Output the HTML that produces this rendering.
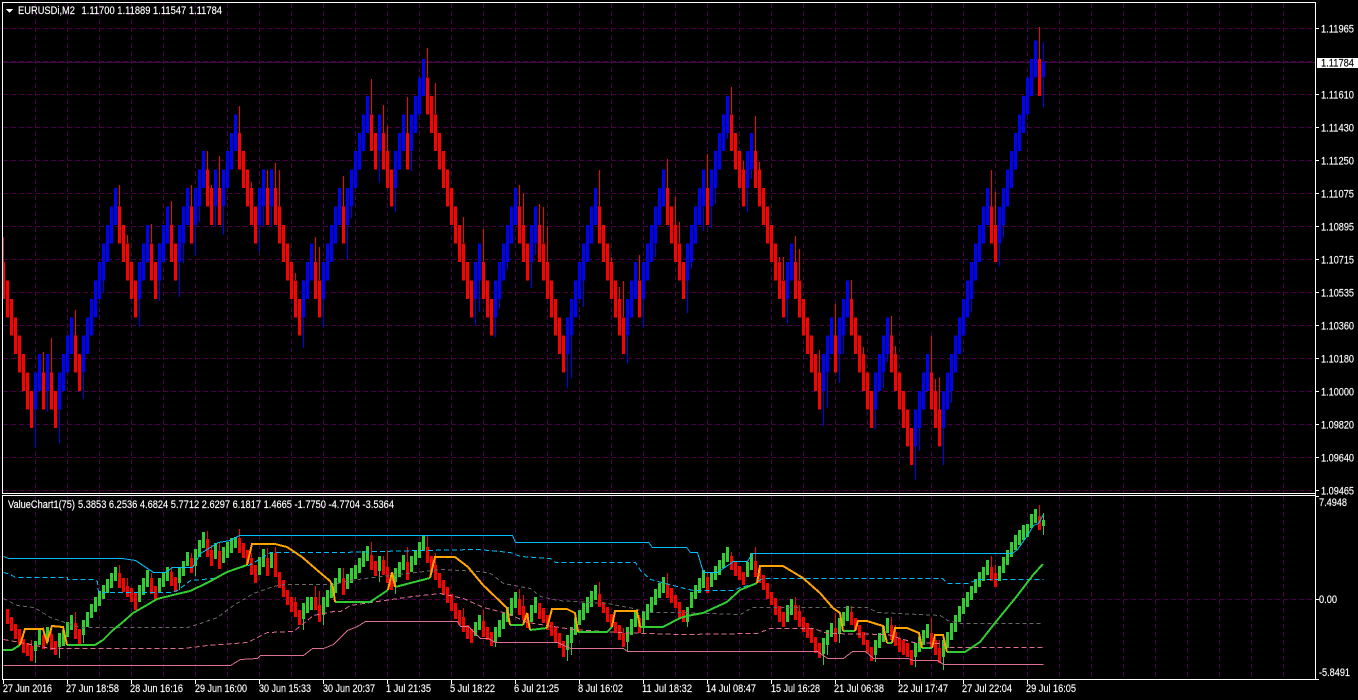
<!DOCTYPE html>
<html>
<head>
<meta charset="utf-8">
<title>EURUSDi,M2</title>
<style>
html,body{margin:0;padding:0;background:#000;width:1358px;height:700px;overflow:hidden}
svg{display:block}
text{font-family:"Liberation Sans",sans-serif;font-size:11px;fill:#fff;stroke:#fff;stroke-width:.15px}
.c{shape-rendering:crispEdges;fill:none}
</style>
</head>
<body>
<svg width="1358" height="700" viewBox="0 0 1358 700" xmlns="http://www.w3.org/2000/svg">
<rect width="1358" height="700" fill="#000"/>

<!-- grid -->
<g class="c" stroke="#480048" stroke-width="1" stroke-dasharray="5 3">
<path d="M3 28.5H1315M3 94.5H1315M3 127.5H1315M3 160.5H1315M3 193.5H1315M3 226.5H1315M3 259.5H1315M3 292.5H1315M3 325.5H1315M3 358.5H1315M3 391.5H1315M3 424.5H1315M3 457.5H1315M3 490.5H1315M3 61.5H1315"/>
<path d="M35.5 3V493M67.5 3V493M99.5 3V493M131.5 3V493M163.5 3V493M195.5 3V493M227.5 3V493M259.5 3V493M291.5 3V493M323.5 3V493M355.5 3V493M387.5 3V493M419.5 3V493M451.5 3V493M483.5 3V493M515.5 3V493M547.5 3V493M579.5 3V493M611.5 3V493M643.5 3V493M675.5 3V493M707.5 3V493M739.5 3V493M771.5 3V493M803.5 3V493M835.5 3V493M867.5 3V493M899.5 3V493M931.5 3V493M963.5 3V493M995.5 3V493M1027.5 3V493M1059.5 3V493M1091.5 3V493M1123.5 3V493M1155.5 3V493M1187.5 3V493M1219.5 3V493M1251.5 3V493M1283.5 3V493"/>
<path d="M35.5 496V679M67.5 496V679M99.5 496V679M131.5 496V679M163.5 496V679M195.5 496V679M227.5 496V679M259.5 496V679M291.5 496V679M323.5 496V679M355.5 496V679M387.5 496V679M419.5 496V679M451.5 496V679M483.5 496V679M515.5 496V679M547.5 496V679M579.5 496V679M611.5 496V679M643.5 496V679M675.5 496V679M707.5 496V679M739.5 496V679M771.5 496V679M803.5 496V679M835.5 496V679M867.5 496V679M899.5 496V679M931.5 496V679M963.5 496V679M995.5 496V679M1027.5 496V679M1059.5 496V679M1091.5 496V679M1123.5 496V679M1155.5 496V679M1187.5 496V679M1219.5 496V679M1251.5 496V679M1283.5 496V679"/>
<path d="M3 599.5H1315"/>
</g>
<path class="c" stroke="#3a0a3c" stroke-width="1" d="M3 62.5H1315"/>

<!-- main chart wicks -->
<g class="c" transform="translate(3.5 0) scale(4 1)" stroke-width=".25">
<path stroke="#f00" d="M0 237V262M10 352V373M12 338V373M18 310V336M29 185V207M31 235V243M37 224V243M42 201V225M47 185V207M51 151V170M52 185V188M54 156V188M59 106V133M62 182V188M66 170V188M68 163V188M69 170V207M73 273V280M78 237V262M79 247V280M85 176V207M92 79V114M95 105V133M96 126V151M101 97V133M106 48V77M108 83V114M115 217V243M120 229V262M129 185V207M130 193V225M134 204V225M135 207V243M136 226V262M149 170V207M152 257V262M154 287V299M155 281V317M159 255V280M166 159V188M168 197V225M169 222V243M176 154V188M182 87V114M185 161V170M188 116V151M189 162V170M194 257V262M195 257V280M198 236V262M199 249V280M204 350V373M208 304V336M212 280V299M215 347V354M222 316V336M223 346V354M232 336V373M233 379V391M234 377V410M247 170V207M248 192V225M259 27V59"/>
<path stroke="#00f" d="M8 410V448M11 391V412M14 410V443M20 373V399M25 280V293M34 299V327M39 280V301M44 262V297M45 244V263M48 225V256M49 207V222M53 207V226M55 207V235M64 225V251M65 207V226M67 207V226M75 317V348M80 299V327M86 225V259M87 207V218M94 151V183M98 188V212M102 151V171M118 299V325M119 280V312M123 317V337M124 299V309M126 262V270M132 262V288M133 244V255M141 354V388M142 336V378M145 280V307M156 336V363M160 299V328M163 244V257M171 280V313M172 262V269M175 207V231M177 207V228M178 188V204M181 133V139M186 188V212M187 170V179M196 299V323M205 391V426M206 373V408M209 354V383M210 336V354M218 410V429M220 373V388M221 354V362M228 447V480M229 428V451M235 428V465M237 391V403M242 299V312M249 244V266M250 225V238M260 42V107"/>
</g>

<!-- main chart bodies: x = candle index, y = brick level -->
<g class="c" transform="translate(3.5 40.5) scale(4 18.45)" stroke-width=".75">
<path stroke="#f00" d="M0 12v2M1 13v2M2 14v2M3 15v2M4 16v2M5 17v2M6 18v2M7 19v2M10 18v2M12 18v2M13 19v2M18 16v2M19 17v2M29 9v2M30 10v2M31 11v2M32 12v2M33 13v2M37 11v2M38 12v2M42 10v2M43 11v2M47 9v2M51 7v2M52 8v2M54 8v2M59 5v2M60 6v2M61 7v2M62 8v2M63 9v2M66 8v2M68 8v2M69 9v2M70 10v2M71 11v2M72 12v2M73 13v2M74 14v2M78 12v2M79 13v2M85 9v2M92 4v2M93 5v2M95 5v2M96 6v2M97 7v2M101 5v2M106 2v2M107 3v2M108 4v2M109 5v2M110 6v2M111 7v2M112 8v2M113 9v2M114 10v2M115 11v2M116 12v2M117 13v2M120 12v2M121 13v2M122 14v2M129 9v2M130 10v2M131 11v2M134 10v2M135 11v2M136 12v2M137 13v2M138 14v2M139 15v2M140 16v2M149 9v2M150 10v2M151 11v2M152 12v2M153 13v2M154 14v2M155 15v2M159 13v2M166 8v2M167 9v2M168 10v2M169 11v2M170 12v2M176 8v2M182 4v2M183 5v2M184 6v2M185 7v2M188 6v2M189 7v2M190 8v2M191 9v2M192 10v2M193 11v2M194 12v2M195 13v2M198 12v2M199 13v2M200 14v2M201 15v2M202 16v2M203 17v2M204 18v2M208 16v2M212 14v2M213 15v2M214 16v2M215 17v2M216 18v2M217 19v2M222 16v2M223 17v2M224 18v2M225 19v2M226 20v2M227 21v2M232 18v2M233 19v2M234 20v2M247 9v2M248 10v2M259 1v2"/>
<path stroke="#00f" d="M8 18v2M9 17v2M11 17v2M14 18v2M15 17v2M16 16v2M17 15v2M20 16v2M21 15v2M22 14v2M23 13v2M24 12v2M25 11v2M26 10v2M27 9v2M28 8v2M34 12v2M35 11v2M36 10v2M39 11v2M40 10v2M41 9v2M44 10v2M45 9v2M46 8v2M48 8v2M49 7v2M50 6v2M53 7v2M55 7v2M56 6v2M57 5v2M58 4v2M64 8v2M65 7v2M67 7v2M75 13v2M76 12v2M77 11v2M80 12v2M81 11v2M82 10v2M83 9v2M84 8v2M86 8v2M87 7v2M88 6v2M89 5v2M90 4v2M91 3v2M94 4v2M98 6v2M99 5v2M100 4v2M102 4v2M103 3v2M104 2v2M105 1v2M118 12v2M119 11v2M123 13v2M124 12v2M125 11v2M126 10v2M127 9v2M128 8v2M132 10v2M133 9v2M141 15v2M142 14v2M143 13v2M144 12v2M145 11v2M146 10v2M147 9v2M148 8v2M156 14v2M157 13v2M158 12v2M160 12v2M161 11v2M162 10v2M163 9v2M164 8v2M165 7v2M171 11v2M172 10v2M173 9v2M174 8v2M175 7v2M177 7v2M178 6v2M179 5v2M180 4v2M181 3v2M186 6v2M187 5v2M196 12v2M197 11v2M205 17v2M206 16v2M207 15v2M209 15v2M210 14v2M211 13v2M218 18v2M219 17v2M220 16v2M221 15v2M228 20v2M229 19v2M230 18v2M231 17v2M235 19v2M236 18v2M237 17v2M238 16v2M239 15v2M240 14v2M241 13v2M242 12v2M243 11v2M244 10v2M245 9v2M246 8v2M249 9v2M250 8v2M251 7v2M252 6v2M253 5v2M254 4v2M255 3v2M256 2v2M257 1v2M258 0v2"/>
</g>
<rect class="c" x="1042" y="62" width="3" height="15" fill="#00f" style="fill:#00f"/>

<!-- sub-window candles -->
<g class="c" transform="translate(3.5 0) scale(4 1)" stroke-width=".25">
<path stroke="#f00" d="M7 640V646M10 627V635M12 625V634M18 612V623M29 565V573M31 578V586M37 573V578M42 567V572M47 553V558M51 531V539M52 545V550M54 543V551M59 529V538M62 553V558M66 548V558M68 547V553M73 597V602M78 586V597M79 591V605M85 568V578M92 542V555M95 556V560M96 550V567M101 547V562M106 536V547M108 553V565M115 608V617M120 610V621M129 589V599M130 595V606M149 582V594M155 628V633M159 615V618M166 573V584M176 573V577M182 552V556M188 547V561M198 597V605M199 605V611M208 613V628M212 606V612M222 617V625M223 625V632M232 618V633M233 638V640M234 640V648M247 556V567M248 565V573M259 505V516"/>
<path stroke="#32cd32" d="M8 651V663M14 647V658M20 635V643M44 583V590M48 566V576M75 619V630M80 615V625M94 571V582M98 582V594M123 642V647M141 650V661M142 643V655M156 642V651M160 627V634M171 622V627M205 654V665M206 645V655M209 634V643M218 655V662M228 657V667M235 657V670M260 513V535"/>
</g>
<g class="c" transform="translate(3.5 0) scale(4 1)" stroke-width=".75">
<path stroke="#f00" d="M1 609V624M2 617V631M3 624V639M4 629V645M5 639V653M6 643V656M7 646V661M10 635V649M12 634V650M13 641V655M18 623V639M19 629V644M29 573V588M30 578V592M31 586V597M32 588V602M33 593V610M37 578V594M38 586V600M42 572V586M43 577V592M47 558V573M51 539V557M52 550V566M54 551V569M59 538V553M60 543V558M61 550V564M62 558V575M63 565V583M66 558V576M68 553V577M69 572V588M70 580V597M71 590V605M72 597V612M73 602V617M74 610V625M78 597V610M79 605V622M85 578V595M92 555V570M93 561V576M95 560V575M96 567V583M97 575V590M101 562V580M106 547V563M107 556V572M108 565V580M109 573V588M110 580V595M111 587V603M112 594V611M113 603V619M114 610V625M115 617V632M116 625V639M117 629V643M120 621V637M121 627V640M122 632V646M129 599V615M130 606V620M131 613V628M134 603V619M135 608V623M136 615V630M137 622V636M138 627V642M139 633V648M140 641V657M149 594V607M150 602V613M151 607V622M152 614V627M153 622V633M154 625V640M155 633V647M159 618V633M166 584V598M167 588V603M168 595V608M169 602V618M170 610V622M176 577V593M182 556V570M183 561V576M184 566V580M185 572V585M188 561V577M189 568V583M190 575V590M191 583V599M192 592V605M193 598V615M194 606V622M195 612V627M198 605V620M199 611V627M200 617V632M201 623V638M202 628V643M203 637V653M204 643V658M208 628V642M212 612V625M213 618V630M214 625V638M215 632V645M216 640V653M217 647V661M222 625V640M223 632V646M224 638V652M225 640V655M226 643V657M227 650V665M232 633V647M233 640V655M234 648V663M247 567V581M248 573V587M259 516V530"/>
<path stroke="#32cd32" d="M8 641V651M9 629V645M11 627V642M14 633V647M15 630V646M16 622V637M17 615V630M20 620V635M21 612V627M22 604V618M23 597V612M24 591V606M25 585V599M26 579V593M27 573V588M28 567V581M34 585V602M35 578V595M36 570V587M39 578V593M40 572V587M41 567V581M44 568V583M45 561V576M46 552V566M48 549V566M49 540V557M50 532V548M53 543V559M55 547V563M56 542V558M57 538V553M58 537V548M64 557V575M65 549V567M67 552V568M75 603V619M76 597V613M77 597V610M80 597V615M81 590V607M82 583V598M83 578V593M84 568V583M86 574V589M87 568V583M88 565V579M89 558V573M90 551V567M91 546V561M94 556V571M98 568V582M99 562V577M100 555V570M102 556V572M103 550V565M104 542V558M105 535V550M118 622V636M119 615V630M123 627V642M124 620V637M125 613V629M126 607V622M127 598V616M128 592V608M132 605V622M133 597V613M141 635V650M142 627V643M143 618V635M144 610V625M145 603V620M146 597V613M147 591V607M148 585V600M156 627V642M157 619V635M158 611V627M160 611V627M161 604V620M162 597V612M163 589V605M164 583V598M165 577V593M171 607V622M172 592V608M173 585V599M174 578V593M175 570V588M177 572V587M178 566V580M179 560V575M180 553V568M181 547V562M186 562V577M187 553V570M196 605V622M197 599V615M205 638V654M206 630V645M207 623V637M209 618V634M210 612V626M211 606V621M218 640V655M219 633V648M220 626V642M221 618V633M228 643V657M229 637V652M230 630V645M231 624V638M235 640V657M236 632V648M237 623V640M238 615V632M239 606V622M240 598V614M241 592V607M242 586V600M243 579V593M244 572V587M245 567V581M246 560V575M249 566V581M250 557V573M251 550V565M252 542V557M253 535V550M254 530V545M255 525V540M256 524V537M257 514V528M258 509V523M260 520V526"/>
</g>

<!-- sub-window lines -->
<g class="c" stroke-width="1" transform="translate(.5 .5)">
<polyline stroke="#00bfff" points="3,556 8,558 122,558 135,560 153,572 165,572 172,567 192,567 200,553 218,542 230,540 239,535 512,535 515,542 648,542 652,547 686,547 690,552 697,552 703,572 717,572 733,561 747,561 752,553 1012,553 1017,549 1022,542 1027,535 1033,525 1038,523 1043,514"/>
<polyline stroke="#00bfff" stroke-dasharray="5 3" points="3,572 10,574 15,577 67,577 67,579 93,579 97,581 98,592 170,592 177,590 190,580 213,578 230,570 248,565 257,560 270,552 340,552 420,550 477,549 510,552 520,556 550,558 555,562 635,562 640,570 650,579 680,587 693,590 733,590 740,587 755,583 762,578 942,578 947,583 968,583 977,579 1043,579"/>
<polyline stroke="#696969" stroke-dasharray="4 3" points="3,598 17,605 33,607 37,609 50,617 67,623 80,627 187,627 200,623 217,617 233,605 253,593 273,586 283,584 333,584 350,580 373,577 407,573 440,569 480,571 490,573 503,583 530,588 540,596 557,600 607,603 633,608 647,612 680,612 740,614 752,607 867,607 877,612 940,615 947,620 960,623 1040,623"/>
<polyline stroke="#db7093" stroke-dasharray="5 3" points="3,639 20,642 50,648 183,648 207,645 247,642 267,632 293,631 313,615 333,611 340,611 350,605 370,602 412,596 440,593 463,598 483,607 507,613 527,622 553,626 573,629 617,632 680,634 757,633 770,628 813,628 827,633 887,634 913,642 940,643 947,647 1043,647"/>
<polyline stroke="#db7093" points="3,665 230,665 240,659 257,658 260,655 303,655 312,648 323,648 333,644 340,637 347,630 357,626 365,621 457,621 460,626 468,626 480,638 488,638 495,642 557,642 570,648 623,648 627,651 817,651 827,658 843,658 852,651 865,651 873,658 908,658 913,660 937,660 943,664 1043,664"/>
</g>
<g class="c" stroke-width="2">
<path stroke="#32cd32" d="M3 650H12L20 645M67 645H95L103 640 113 630 123 622 133 613 147 605 157 599 173 595 190 591 207 583 227 572 247 565M335 602H370L388 590M395 587L430 578M510 625H523M530 630L547 628M578 632H607L612 627M640 627H663L680 618 687 616 703 613 727 602 740 590 757 583M843 631H855M887 643H892M922 648H932M947 652H965L980 642 995 623 1017 596 1033 575 1043 564"/>
<path stroke="#ffa500" d="M20 645L25 629H43L47 642 52 626 63 627 67 645M247 565L252 544H275L287 547 302 557 317 570 330 581 333 587 335 602M388 590L392 572 395 587M430 578L435 557H455L468 567 483 585 507 608 510 625M523 625L527 613 530 630M547 628L552 609H567L575 613 578 632M612 627L615 611H637L640 627M757 583L760 566H783L803 578 820 593 833 608 840 613 843 631M855 631L858 621H867L883 626 887 643M892 643L895 628 907 628 919 633 922 648M932 648L935 635H943L947 652"/>
</g>

<!-- frames -->
<g class="c" stroke="#fff" stroke-width="1">
<path d="M2.5 3V494M2 2.5H1316M2 493.5H1316M1315.5 2V680M2 495.5H1316M2.5 495V680M2 679.5H1316"/>
<path d="M1316 28.5H1319M1316 94.5H1319M1316 127.5H1319M1316 160.5H1319M1316 193.5H1319M1316 226.5H1319M1316 259.5H1319M1316 292.5H1319M1316 325.5H1319M1316 358.5H1319M1316 391.5H1319M1316 424.5H1319M1316 457.5H1319M1316 490.5H1319M1316 496.5H1319M1316 599.5H1319M1316 679.5H1319"/>
<path d="M3.5 680V684M67.5 680V684M131.5 680V684M195.5 680V684M259.5 680V684M323.5 680V684M387.5 680V684M451.5 680V684M515.5 680V684M579.5 680V684M643.5 680V684M707.5 680V684M771.5 680V684M835.5 680V684M899.5 680V684M963.5 680V684M1027.5 680V684"/>
</g>

<!-- title -->
<polygon class="c" style="fill:#fff" points="6,9 13,9 9.5,13"/>
<text x="18" y="14" textLength="57" lengthAdjust="spacingAndGlyphs">EURUSDi,M2</text>
<text x="81.5" y="14" textLength="140.5" lengthAdjust="spacingAndGlyphs">1.11700 1.11889 1.11547 1.11784</text>
<text x="8" y="508" textLength="67" lengthAdjust="spacingAndGlyphs">ValueChart1(75)</text>
<text x="78" y="508" textLength="316" lengthAdjust="spacingAndGlyphs">5.3853 6.2536 4.6824 5.7712 2.6297 6.1817 1.4665 -1.7750 -4.7704 -3.5364</text>

<!-- price axis -->
<g>
<text x="1321" y="32.5" textLength="33" lengthAdjust="spacingAndGlyphs">1.11965</text>
<rect x="1317" y="58" width="41" height="10" style="fill:#fff"/>
<text x="1321" y="66.5" textLength="33" lengthAdjust="spacingAndGlyphs" style="fill:#000;stroke:#000">1.11784</text>
<text x="1321" y="98.5" textLength="33" lengthAdjust="spacingAndGlyphs">1.11610</text>
<text x="1321" y="131.5" textLength="33" lengthAdjust="spacingAndGlyphs">1.11430</text>
<text x="1321" y="164.5" textLength="33" lengthAdjust="spacingAndGlyphs">1.11250</text>
<text x="1321" y="197.5" textLength="33" lengthAdjust="spacingAndGlyphs">1.11075</text>
<text x="1321" y="230.5" textLength="33" lengthAdjust="spacingAndGlyphs">1.10895</text>
<text x="1321" y="263.5" textLength="33" lengthAdjust="spacingAndGlyphs">1.10715</text>
<text x="1321" y="296.5" textLength="33" lengthAdjust="spacingAndGlyphs">1.10535</text>
<text x="1321" y="329.5" textLength="33" lengthAdjust="spacingAndGlyphs">1.10360</text>
<text x="1321" y="362.5" textLength="33" lengthAdjust="spacingAndGlyphs">1.10180</text>
<text x="1321" y="395.5" textLength="33" lengthAdjust="spacingAndGlyphs">1.10000</text>
<text x="1321" y="428.5" textLength="33" lengthAdjust="spacingAndGlyphs">1.09820</text>
<text x="1321" y="461.5" textLength="33" lengthAdjust="spacingAndGlyphs">1.09640</text>
<text x="1321" y="494.5" textLength="33" lengthAdjust="spacingAndGlyphs">1.09465</text>
<text x="1319" y="506" textLength="28" lengthAdjust="spacingAndGlyphs">7.4948</text>
<text x="1319" y="603" textLength="18" lengthAdjust="spacingAndGlyphs">0.00</text>
<text x="1319" y="676" textLength="31" lengthAdjust="spacingAndGlyphs">-5.8491</text>
</g>

<!-- time axis -->
<g>
<text x="3" y="692" textLength="49" lengthAdjust="spacingAndGlyphs">27 Jun 2016</text>
<text x="66" y="692" textLength="53" lengthAdjust="spacingAndGlyphs">27 Jun 18:58</text>
<text x="130" y="692" textLength="53" lengthAdjust="spacingAndGlyphs">28 Jun 16:16</text>
<text x="195" y="692" textLength="52" lengthAdjust="spacingAndGlyphs">29 Jun 16:00</text>
<text x="259" y="692" textLength="52" lengthAdjust="spacingAndGlyphs">30 Jun 15:33</text>
<text x="323" y="692" textLength="52" lengthAdjust="spacingAndGlyphs">30 Jun 20:37</text>
<text x="386" y="692" textLength="45" lengthAdjust="spacingAndGlyphs">1 Jul 21:35</text>
<text x="450" y="692" textLength="45" lengthAdjust="spacingAndGlyphs">5 Jul 18:22</text>
<text x="514" y="692" textLength="45" lengthAdjust="spacingAndGlyphs">6 Jul 21:25</text>
<text x="578" y="692" textLength="45" lengthAdjust="spacingAndGlyphs">8 Jul 16:02</text>
<text x="642" y="692" textLength="50" lengthAdjust="spacingAndGlyphs">11 Jul 18:32</text>
<text x="706" y="692" textLength="50" lengthAdjust="spacingAndGlyphs">14 Jul 08:47</text>
<text x="771" y="692" textLength="49" lengthAdjust="spacingAndGlyphs">15 Jul 16:28</text>
<text x="834" y="692" textLength="50" lengthAdjust="spacingAndGlyphs">21 Jul 06:38</text>
<text x="898" y="692" textLength="50" lengthAdjust="spacingAndGlyphs">22 Jul 17:47</text>
<text x="962" y="692" textLength="50" lengthAdjust="spacingAndGlyphs">27 Jul 22:04</text>
<text x="1026" y="692" textLength="50" lengthAdjust="spacingAndGlyphs">29 Jul 16:05</text>
</g>
</svg>
</body>
</html>
